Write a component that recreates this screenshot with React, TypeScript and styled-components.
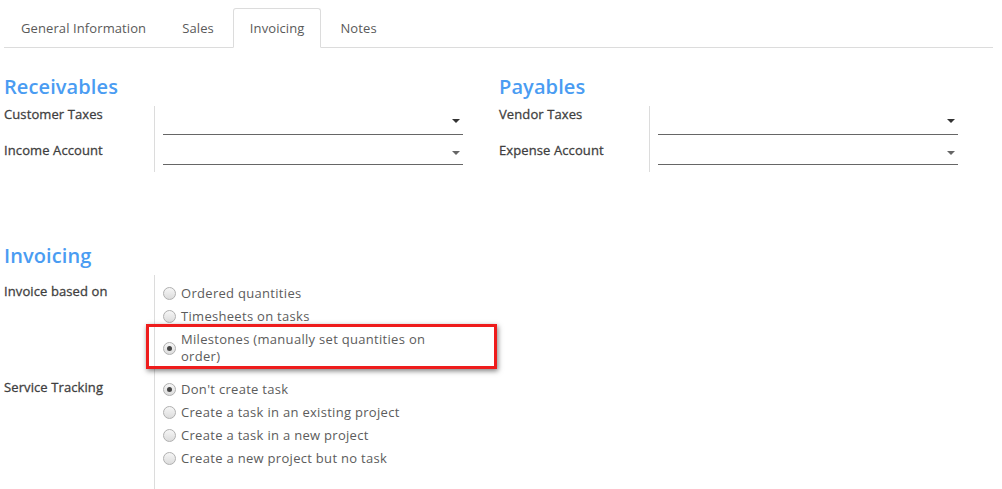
import React from "react";
import styled, { createGlobalStyle } from "styled-components";

const Global = createGlobalStyle`
  html, body { margin: 0; padding: 0; background: #fff; }
  body { font-family: "Open Sans", "Liberation Sans", sans-serif; font-size: 13px; color: #4c4c4c; }
  * { box-sizing: border-box; }
`;

const Page = styled.div`
  width: 1002px;
  height: 489px;
  overflow: hidden;
  padding-top: 8px;
`;

const TabBar = styled.div`
  display: flex;
  margin: 0 9px 0 4px;
  border-bottom: 1px solid #dcdcdc;
  height: 40px;
`;

const Tab = styled.div<{ $active?: boolean }>`
  height: ${(p) => (p.$active ? "40px" : "39px")};
  padding: 0 16px;
  margin-right: 2px;
  display: flex;
  align-items: center;
  color: #5a5a5a;
  font-size: 13px;
  letter-spacing: 0.1px;
  border: 1px solid ${(p) => (p.$active ? "#dcdcdc" : "transparent")};
  border-bottom: ${(p) => (p.$active ? "1px solid #fff" : "none")};
  border-radius: 3px 3px 0 0;
  background: #fff;
  padding-bottom: 1px;
  ${(p) => (p.$active ? "margin-bottom: -1px;" : "")}
`;

const Columns = styled.div`
  display: flex;
  padding-left: 4px;
  margin-top: 27px;
`;

const Column = styled.div`
  width: 495px;
`;

const Heading = styled.div<{ $mt?: number }>`
  color: #4a9cf2;
  font-size: 20px;
  font-weight: 600;
  line-height: 24px;
  margin-top: ${(p) => p.$mt ?? 0}px;
  margin-bottom: 7px;
  letter-spacing: 0.1px;
`;

const FieldTable = styled.div`
  display: grid;
  grid-template-columns: 150px 309px;
`;

const Label = styled.div<{ $pt?: number; $h?: number }>`
  font-weight: 400;
  color: #3f3f3f;
  -webkit-text-stroke: 0.3px currentColor;
  line-height: 16px;
  letter-spacing: 0.1px;
  padding-top: ${(p) => p.$pt ?? 0}px;
  height: ${(p) => (p.$h ? `${p.$h}px` : "auto")};
`;

const FieldCell = styled.div<{ $h?: number }>`
  border-left: 1px solid #dcdcdc;
  padding-left: 8px;
  height: ${(p) => (p.$h ? `${p.$h}px` : "auto")};
`;

const Select = styled.div<{ $mt: number; $h: number; $dark?: boolean }>`
  margin-top: ${(p) => p.$mt}px;
  height: ${(p) => p.$h}px;
  width: 300px;
  border-bottom: 1px solid #666;
  display: flex;
  align-items: center;
  justify-content: flex-end;
  padding-right: 3px;
  &::after {
    content: "";
    border-left: 4px solid transparent;
    border-right: 4px solid transparent;
    border-top: 4px solid ${(p) => (p.$dark ? "#333" : "#666")};
  }
`;

const Section = styled.div`
  padding-left: 4px;
`;

const InvTable = styled.div`
  display: grid;
  grid-template-columns: 150px 340px;
`;

const RadioList = styled.div<{ $pt: number; $pb: number }>`
  border-left: 1px solid #dcdcdc;
  padding: ${(p) => p.$pt}px 0 ${(p) => p.$pb}px 8px;
  display: flex;
  flex-direction: column;
`;

const RadioItem = styled.div`
  position: relative;
  display: flex;
  align-items: center;
  gap: 5px;
  padding: 3px 0;
  line-height: 17px;
  color: #5c5c5c;
  letter-spacing: 0.3px;
`;

const Circle = styled.span<{ $checked?: boolean }>`
  flex: none;
  width: 13px;
  height: 13px;
  border-radius: 50%;
  border: 1px solid #b0b0b0;
  background: linear-gradient(#f6f6f6, #dcdcdc);
  display: flex;
  align-items: center;
  justify-content: center;
  &::after {
    content: "";
    display: ${(p) => (p.$checked ? "block" : "none")};
    width: 5px;
    height: 5px;
    border-radius: 50%;
    background: #444;
  }
`;

const RadioText = styled.span`
  max-width: 262px;
`;

const Highlight = styled.div`
  position: absolute;
  left: -17px;
  top: -4px;
  width: 351px;
  height: 45px;
  border: 3px solid #ee1c1c;
  box-shadow: 1px 2px 5px rgba(0, 0, 0, 0.5);
  pointer-events: none;
`;

const Radio = ({ label, checked, highlight }: { label: string; checked?: boolean; highlight?: boolean }) => (
  <RadioItem>
    <Circle $checked={checked} />
    <RadioText>{label}</RadioText>
    {highlight && <Highlight />}
  </RadioItem>
);

export default function App() {
  return (
    <Page>
      <Global />
      <TabBar>
        <Tab>General Information</Tab>
        <Tab>Sales</Tab>
        <Tab $active>Invoicing</Tab>
        <Tab>Notes</Tab>
      </TabBar>
      <Columns>
        <Column>
          <Heading>Receivables</Heading>
          <FieldTable>
            <Label $h={34}>Customer Taxes</Label>
            <FieldCell $h={34}>
              <Select $mt={2} $h={27} $dark />
            </FieldCell>
            <Label $pt={2} $h={32}>Income Account</Label>
            <FieldCell $h={32}>
              <Select $mt={1} $h={24} />
            </FieldCell>
          </FieldTable>
        </Column>
        <Column>
          <Heading>Payables</Heading>
          <FieldTable>
            <Label $h={34}>Vendor Taxes</Label>
            <FieldCell $h={34}>
              <Select $mt={2} $h={27} $dark />
            </FieldCell>
            <Label $pt={2} $h={32}>Expense Account</Label>
            <FieldCell $h={32}>
              <Select $mt={1} $h={24} />
            </FieldCell>
          </FieldTable>
        </Column>
      </Columns>
      <Section>
        <Heading $mt={72}>Invoicing</Heading>
        <InvTable>
          <Label $pt={8}>Invoice based on</Label>
          <RadioList $pt={7} $pb={5}>
            <Radio label="Ordered quantities" />
            <Radio label="Timesheets on tasks" />
            <Radio label="Milestones (manually set quantities on order)" checked highlight />
          </RadioList>
          <Label $pt={6}>Service Tracking</Label>
          <RadioList $pt={5} $pb={30}>
            <Radio label="Don't create task" checked />
            <Radio label="Create a task in an existing project" />
            <Radio label="Create a task in a new project" />
            <Radio label="Create a new project but no task" />
          </RadioList>
        </InvTable>
      </Section>
    </Page>
  );
}
